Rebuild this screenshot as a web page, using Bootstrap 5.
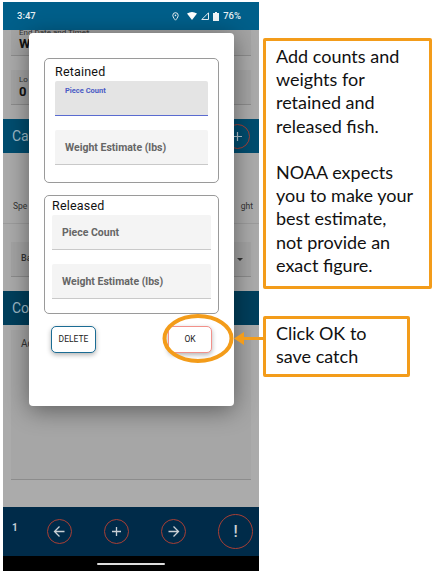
<!DOCTYPE html>
<html lang="en">
<head>
<meta charset="utf-8">
<title>Catch entry</title>
<link href="https://cdn.jsdelivr.net/npm/bootstrap@5.3.0/dist/css/bootstrap.min.css" rel="stylesheet">
<style>
html,body{margin:0;background:#fff;}
body{width:436px;height:576px;overflow:hidden;font-family:Roboto,"Liberation Sans",sans-serif;}
.stage{padding:2px 5px 0 3px;gap:4px;position:relative;}
.phone{width:256px;height:569px;position:relative;background:#ababab;flex:none;overflow:hidden;}
.statusbar{height:28px;background:#005f8a;color:#e8f0f4;font-size:9.5px;font-weight:500;padding:0 18px 0 14px;}
.dim-body{height:89px;padding:0 8px;}
.dimfield{background:#a4a4a4;border-bottom:1px solid #8c8c8c;padding:0 8px;color:#333;overflow:hidden;}
.dimfield-top{height:26px;font-size:8px;line-height:6px;}
.dimfield-top b{display:block;font-size:13px;line-height:16px;color:#111;margin-top:0;}
.dimfield-low{height:35px;margin-top:14px;font-size:8px;padding-top:5px;line-height:10px;}
.dimfield-low b{display:block;font-size:13px;line-height:13px;color:#111;}
.sect{height:34px;background:#004d6f;color:#9eb9c6;font-size:14px;padding:0 9px;}
.sect-comments{background:#003f5c;}
.plus-ring{width:25px;height:25px;border:1px solid #a83f35;border-radius:50%;color:#bcc;}
.catch-body{height:138px;padding:0 8px;font-size:8.5px;color:#333;}
.species{height:71px;margin:0 -8px;padding:0 6px 10px 10px;border-bottom:1px solid #9c9c9c;}
.baitfield{height:35px;margin-top:18px;background:#a4a4a4;border-bottom:1px solid #8c8c8c;padding:0 8px 0 10px;font-size:9px;font-weight:500;}
.caret-dim{width:0;height:0;border-left:3px solid transparent;border-right:3px solid transparent;border-top:3px solid #333;}
.comments-body{height:182px;padding:5px 8px 0;}
.commentfield{height:150px;background:#a6a6a6;border-bottom:1px solid #8c8c8c;padding:6px 10px;font-size:10px;color:#333;}
.navbottom{height:49px;background:#002b49;padding:0 6px 0 9px;position:relative;}
.pageno{color:#c4ced6;font-size:10px;font-weight:700;width:24px;margin-top:-8px;}
.ring{border:1px solid #a83f35;border-radius:50%;width:25px;height:25px;display:flex;align-items:center;justify-content:center;}
.ring-big{width:35px;height:35px;color:#c9d0d5;font-size:16px;font-weight:500;}
.navgroup{gap:32px;margin-left:11px;}
.gesture{height:15px;background:#000;}
.gesture i{display:block;width:68px;height:2px;border-radius:1px;background:#ddd;}
.dialog{position:absolute;left:26px;top:31px;width:205px;height:373px;background:#fff;border-radius:4px;box-shadow:0 4px 24px rgba(0,0,0,.45);padding:25px 15px 0;}
.groupbox{border:1px solid #9a9a9a;border-radius:5px;background:#fff;}
.gb-retained{height:125px;padding:5px 10px 0;}
.gb-released{height:119px;margin-top:12px;padding:2px 7px 0;}
.gb-title{font-size:12.5px;line-height:15px;font-weight:400;color:#111;margin:0;letter-spacing:.2px;}
.gb-released .gb-title{margin-bottom:2px;}
.mfield{height:35px;background:#f4f4f4;border-bottom:1px solid #c9c9c9;border-radius:2px 2px 0 0;color:#666;font-size:10.5px;font-weight:700;padding:0 10px;line-height:35px;margin:0 0 14px;}
.mfield-active{background:#e4e4e4;border-bottom:1px solid #5a6bd0;color:#4a5bc4;font-size:7.5px;line-height:9px;padding-top:5px;margin-top:2px;}
.actions{padding:12px 7px 0 7px;}
.actionbtn{--bs-btn-padding-x:0;--bs-btn-padding-y:0;--bs-btn-font-size:8.5px;--bs-btn-color:#222;--bs-btn-bg:#fff;--bs-btn-hover-bg:#fff;--bs-btn-border-radius:5px;width:45px;height:27px;font-family:Roboto,sans-serif;font-weight:400;box-shadow:0 2px 5px rgba(0,0,0,.3);}
.btn-del{border:1px solid #1b6c94;}
.btn-ok{width:44px;border:1px solid #f2918a;}
.notes{width:173px;flex:none;padding-top:36px;}
.note{font-family:Lato,"Liberation Sans",sans-serif;border:3px solid #f39c1a;border-radius:2px;background:#fff;color:#111;font-size:18px;line-height:23.2px;}
.note-a{width:169px;height:251px;padding:4px 4px 0 10px;}
.note-b{width:147px;height:61px;margin-top:27px;padding:3px 4px 0 10px;}
.ok-ellipse{position:absolute;left:162px;top:314px;width:72px;height:49px;pointer-events:none;}
.ok-arrow{position:absolute;left:233px;top:331px;width:31px;height:15px;}
</style>
</head>
<body>
<div class="stage d-flex">
  <div class="phone">
    <div class="statusbar d-flex align-items-center justify-content-between">
      <span>3:47</span>
      <span class="d-flex align-items-center gap-1">
        <svg width="7" height="9" viewBox="0 0 7 9"><path d="M3.500.7a2.700 2.700 0 0 0-2.700 2.700c0 2 2.700 4.800 2.700 4.800s2.700-2.800 2.700-4.800A2.700 2.700 0 0 0 3.500.7z" fill="none" stroke="#e8f0f4" stroke-width="1"/><circle cx="3.500" cy="3.400" r=".8" fill="#e8f0f4"/></svg>
        <svg class="ms-1" width="10" height="8" viewBox="0 0 10 8"><path d="M0 1.500Q5-1.500 10 1.500L5 8z" fill="#fff"/></svg>
        <svg width="8" height="8" viewBox="0 0 8 8"><path d="M7.500.8V7.500H.8z" fill="none" stroke="#e8f0f4"/></svg>
        <svg width="6" height="9" viewBox="0 0 6 9"><path d="M2 0h2v1h2v8H0V1h2z" fill="#f2f6f8"/></svg>
        <span>76%</span>
      </span>
    </div>
    <div class="dim-body">
      <div class="dimfield dimfield-top">End Date and Time*<b>W</b></div>
      <div class="dimfield dimfield-low">Lo<b>0</b></div>
    </div>
    <div class="sect d-flex align-items-center justify-content-between">
      <span>Ca</span>
      <span class="plus-ring d-flex align-items-center justify-content-center"><svg width="11" height="11" viewBox="0 0 11 11"><path d="M5.500 1v9M1 5.500h9" stroke="#b4c6d0" stroke-width="1.200"/></svg></span>
    </div>
    <div class="catch-body">
      <div class="species d-flex align-items-end justify-content-between"><span>Spe</span><span>ght</span></div>
      <div class="baitfield d-flex align-items-center justify-content-between"><span>Ba</span><span class="caret-dim"></span></div>
    </div>
    <div class="sect sect-comments d-flex align-items-center"><span>Co</span></div>
    <div class="comments-body">
      <div class="commentfield">Ad</div>
    </div>
    <div class="navbottom d-flex align-items-center justify-content-between">
      <div class="d-flex align-items-center">
        <span class="pageno">1</span>
        <div class="navgroup d-flex">
          <span class="ring"><svg width="13" height="13" viewBox="0 0 13 13"><path d="M11.500 6.500H2M6.500 1.500l-5 5 5 5" fill="none" stroke="#c9d0d5" stroke-width="1.300"/></svg></span>
          <span class="ring"><svg width="11" height="11" viewBox="0 0 11 11"><path d="M5.500 1v9M1 5.500h9" stroke="#c9d0d5" stroke-width="1.300"/></svg></span>
          <span class="ring"><svg width="13" height="13" viewBox="0 0 13 13"><path d="M1.500 6.500H11M6.500 1.500l5 5-5 5" fill="none" stroke="#c9d0d5" stroke-width="1.300"/></svg></span>
        </div>
      </div>
      <span class="ring ring-big">!</span>
    </div>
    <div class="gesture d-flex align-items-center justify-content-center"><i></i></div>

    <div class="dialog">
      <div class="groupbox gb-retained">
        <h6 class="gb-title">Retained</h6>
        <div class="mfield mfield-active">Piece Count</div>
        <div class="mfield">Weight Estimate (lbs)</div>
      </div>
      <div class="groupbox gb-released">
        <h6 class="gb-title">Released</h6>
        <div class="mfield">Piece Count</div>
        <div class="mfield">Weight Estimate (lbs)</div>
      </div>
      <div class="actions d-flex justify-content-between">
        <button type="button" class="btn actionbtn btn-del">DELETE</button>
        <button type="button" class="btn actionbtn btn-ok">OK</button>
      </div>
    </div>
  </div>
  <div class="notes">
    <div class="note note-a">Add counts and<br>weights for<br>retained and<br>released fish.<br><br>NOAA expects<br>you to make your<br>best estimate,<br>not provide an<br>exact figure.</div>
    <div class="note note-b">Click OK to<br>save catch</div>
  </div>
  <svg class="ok-ellipse" viewBox="0 0 72 49"><ellipse cx="36" cy="24.500" rx="33.500" ry="22.500" fill="none" stroke="#f39c1a" stroke-width="4"/></svg>
  <svg class="ok-arrow" viewBox="0 0 31 15"><path d="M31 6v3H11v5L1 7.500 11 1v5z" fill="#f39c1a"/></svg>
</div>
</body>
</html>
